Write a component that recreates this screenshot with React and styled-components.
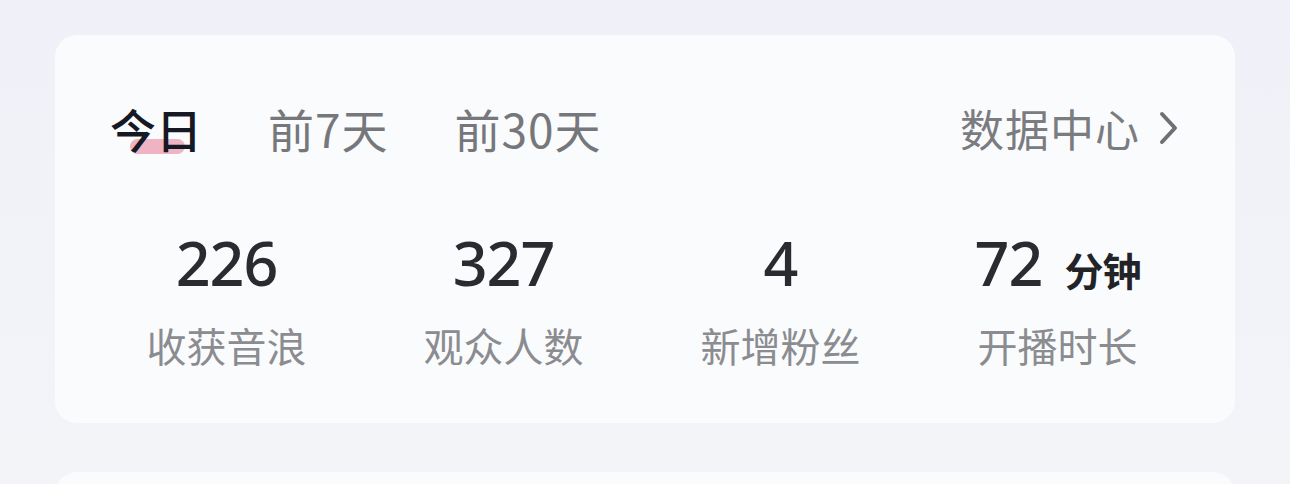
import React from "react";
import styled, { createGlobalStyle } from "styled-components";

const Global = createGlobalStyle`
  html, body { margin: 0; padding: 0; }
  body {
    background: linear-gradient(180deg, #f0f1f8 0%, #f3f4f8 100%);
    font-family: "Noto Sans CJK SC", "Noto Sans", sans-serif;
    width: 1290px;
    height: 484px;
    overflow: hidden;
  }
`;

const Page = styled.div`
  height: 484px;
  box-sizing: border-box;
  overflow: hidden;
  padding: 35px 55px 0 55px;
  display: flex;
  flex-direction: column;
  gap: 49px;
`;

const Card = styled.div`
  flex-shrink: 0;
  background: #fafbfd;
  border-radius: 22px;
  height: ${(p) => p.$h}px;
  box-sizing: border-box;
  display: flex;
  flex-direction: column;
`;

const TabBar = styled.div`
  display: flex;
  align-items: center;
  height: 60px;
  margin-top: 63px;
  padding: 0 55px 0 55px;
`;

const Tabs = styled.div`
  display: flex;
  gap: 66px;
  flex: 1;
`;

const Tab = styled.div`
  position: relative;
  font-size: 46px;
  line-height: 60px;
  letter-spacing: ${(p) => (p.$active ? "0px" : "1px")};
  color: ${(p) => (p.$active ? "#161823" : "#76777b")};
  font-weight: ${(p) => (p.$active ? 500 : 400)};
  z-index: 0;
`;

const Underline = styled.span`
  position: absolute;
  left: 20px;
  top: 41px;
  width: 55px;
  height: 15px;
  border-radius: 8px;
  background: #efb4c4;
  z-index: -1;
`;

const MoreLink = styled.div`
  display: flex;
  align-items: center;
  gap: 18px;
  font-size: 44px;
  letter-spacing: 1px;
  line-height: 60px;
  color: #7b7c80;
`;

const Stats = styled.div`
  display: grid;
  grid-template-columns: repeat(4, 277px);
  padding-left: 33px;
  margin-top: 69px;
`;

const Stat = styled.div`
  display: flex;
  flex-direction: column;
  align-items: center;
`;

const Value = styled.div`
  display: flex;
  align-items: baseline;
  gap: 22px;
  height: 72px;
  font-family: "Noto Sans", sans-serif;
  font-size: 61px;
  line-height: 72px;
  font-weight: 500;
  color: #2a2b31;
  letter-spacing: -1px;
`;

const Unit = styled.span`
  font-family: "Noto Sans CJK SC", sans-serif;
  font-size: 39px;
  font-weight: 700;
  color: #222327;
`;

const Label = styled.div`
  margin-top: 20px;
  font-size: 40px;
  line-height: 52px;
  color: #8b8c90;
`;

const Chevron = () => (
  <svg width="22" height="34" viewBox="0 0 22 34">
    <path d="M4 3 L17 17 L4 31" fill="none" stroke="#6f7075" strokeWidth="4" strokeLinecap="round" strokeLinejoin="round" />
  </svg>
);

const stats = [
  { v: "226", l: "收获音浪" },
  { v: "327", l: "观众人数" },
  { v: "4", l: "新增粉丝" },
  { v: "72", u: "分钟", l: "开播时长" },
];

export default function App() {
  return (
    <>
      <Global />
      <Page>
        <Card $h={388}>
          <TabBar>
            <Tabs>
              <Tab $active>
                今日
                <Underline />
              </Tab>
              <Tab>前7天</Tab>
              <Tab>前30天</Tab>
            </Tabs>
            <MoreLink>
              数据中心
              <Chevron />
            </MoreLink>
          </TabBar>
          <Stats>
            {stats.map((s) => (
              <Stat key={s.l}>
                <Value>
                  {s.v}
                  {s.u && <Unit>{s.u}</Unit>}
                </Value>
                <Label>{s.l}</Label>
              </Stat>
            ))}
          </Stats>
        </Card>
        <Card $h={200} />
      </Page>
    </>
  );
}
